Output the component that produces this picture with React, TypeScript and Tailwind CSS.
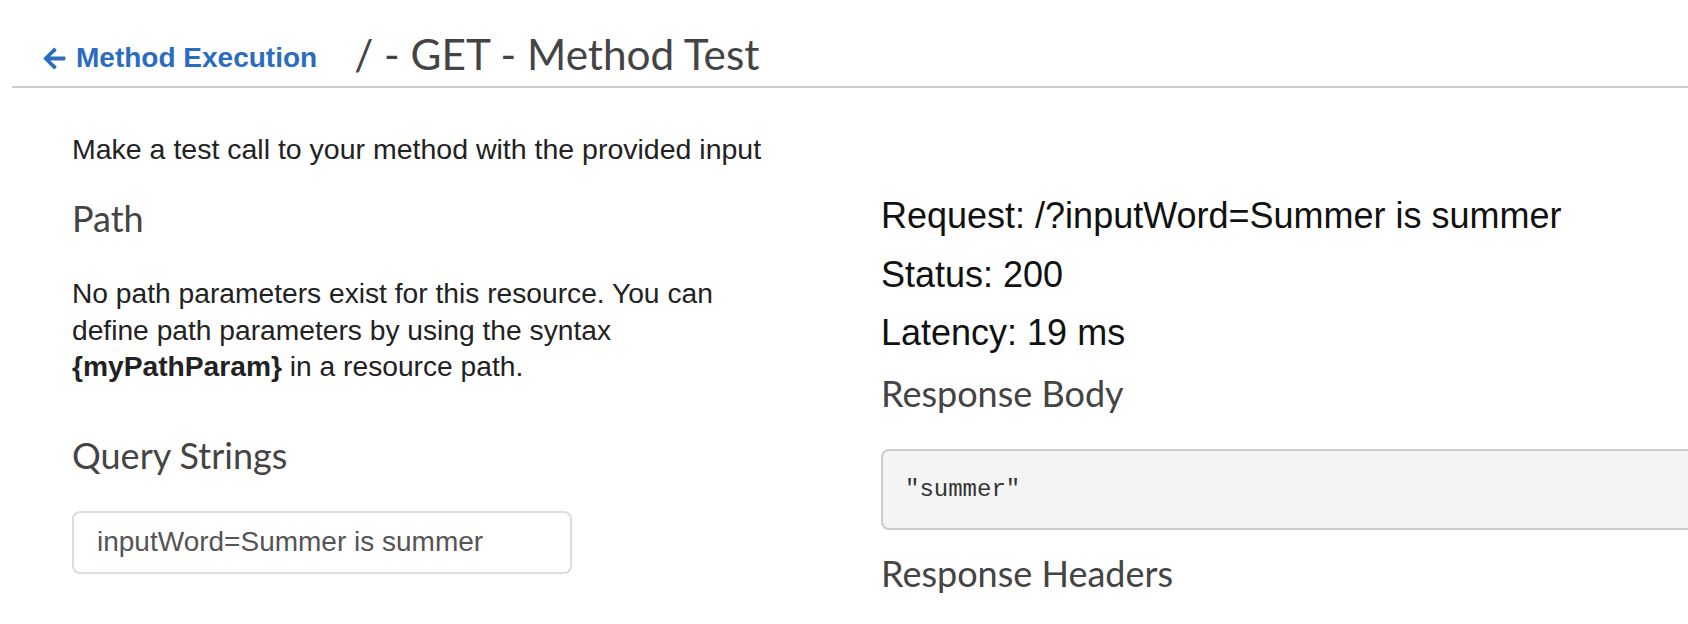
import { FaArrowLeft } from 'react-icons/fa';

const sans = "font-['Helvetica','Liberation_Sans',Arial,sans-serif]";
const lato = "font-['Lato','Liberation_Sans',sans-serif]";

export default function App() {
  return (
    <div className="w-[1688px] h-[624px] overflow-hidden bg-white">
      {/* page header */}
      <div className="ml-[12px] h-[88px] border-b-2 border-[#cccccc] flex items-start pl-[30px]">
        <a className={`mt-[44px] flex items-center text-[28px] leading-[28px] font-bold text-[#2b6cc0] ${sans}`}>
          <FaArrowLeft className="w-[25px] h-[25px] mr-[9px]" />
          Method Execution
        </a>
        <h1 className={`mt-[33px] ml-[37px] text-[42.3px] leading-[42px] text-[#444444] ${lato}`}>
          / - GET - Method Test
        </h1>
      </div>

      <div className="flex">
        {/* left column: inputs */}
        <div className="ml-[72px] w-[720px] shrink-0">
          <p className={`mt-[43px] text-[28.5px] leading-[36px] text-[#222222] ${sans}`}>
            Make a test call to your method with the provided input
          </p>
          <h3 className={`mt-[31px] text-[36px] leading-[40px] text-[#444444] ${lato}`}>Path</h3>
          <p className={`mt-[37px] w-[700px] text-[28.2px] leading-[36.6px] text-[#222222] ${sans}`}>
            No path parameters exist for this resource. You can define path parameters by using the syntax{' '}
            <b>{'{myPathParam}'}</b> in a resource path.
          </p>
          <h3 className={`mt-[50px] text-[36px] leading-[40px] text-[#444444] ${lato}`}>Query Strings</h3>
          <div className="mt-[36px] w-[500px] h-[63px] rounded-[8px] border-2 border-[#dddddd] flex items-center px-[23px]">
            <span className={`text-[28px] leading-[32px] text-[#555555] ${sans}`}>inputWord=Summer is summer</span>
          </div>
        </div>

        {/* right column: result */}
        <div className="ml-[89px] w-[850px] shrink-0">
          <p className={`mt-[108px] text-[36px] leading-[40px] text-[#111111] ${sans}`}>
            Request: /?inputWord=Summer is summer
          </p>
          <p className={`mt-[19px] text-[36px] leading-[40px] text-[#111111] ${sans}`}>Status: 200</p>
          <p className={`mt-[18px] text-[36px] leading-[40px] text-[#111111] ${sans}`}>Latency: 19 ms</p>
          <h3 className={`mt-[20px] text-[36px] leading-[40px] text-[#444444] ${lato}`}>Response Body</h3>
          <div className="mt-[36px] h-[81px] rounded-[8px] border-2 border-[#cccccc] bg-[#f4f4f4] flex items-center px-[22px]">
            <pre className="text-[24px] leading-[30px] text-[#333333] font-['Courier_New','Liberation_Mono',monospace]">"summer"</pre>
          </div>
          <h3 className={`mt-[23px] text-[36px] leading-[40px] text-[#444444] ${lato}`}>Response Headers</h3>
        </div>
      </div>
    </div>
  );
}
